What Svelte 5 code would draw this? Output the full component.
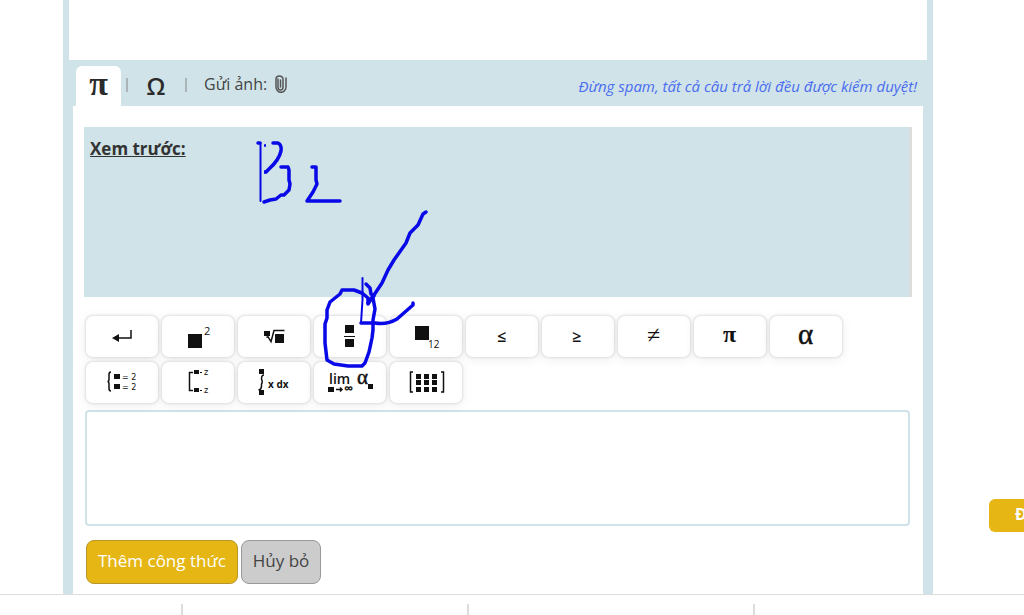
<script lang="ts">
    type Box = [number, number, number, number];
    type Label = { x: number; y: number; size: number; text: string; kind?: string };
    type Key = { name: string; boxes?: Box[]; line?: string; fill?: string; labels?: Label[] };

    let formula = $state("");

    // Every glyph is drawn on a 72x41 canvas, the size of a key
    const rows: Key[][] = [
        [
            { name: "Xuống dòng", line: "M29 22H45V14", fill: "M26 22l7-4v8z" },
            {
                name: "Lũy thừa",
                boxes: [[26, 18, 14, 14]],
                labels: [{ x: 42, y: 19, size: 11, text: "2" }],
            },
            {
                name: "Căn bậc n",
                boxes: [[26, 15, 6, 5], [37, 18, 9, 9]],
                line: "M28.5 21.5l1.5-.8 3 5L36 14.5H46.5",
            },
            { name: "Phân số", boxes: [[31, 9, 9, 8], [30, 20, 11, 1], [31, 23, 9, 8]] },
            {
                name: "Chỉ số dưới",
                boxes: [[25, 10, 14, 14]],
                labels: [{ x: 38, y: 32, size: 10, text: "12" }],
            },
            { name: "Nhỏ hơn hoặc bằng", labels: [{ x: 31, y: 26, size: 16, text: "≤", kind: "semi" }] },
            { name: "Lớn hơn hoặc bằng", labels: [{ x: 30, y: 26, size: 16, text: "≥", kind: "semi" }] },
            { name: "Khác", labels: [{ x: 29, y: 27, size: 24, text: "≠", kind: "greek" }] },
            { name: "Pi", labels: [{ x: 29, y: 26, size: 24, text: "π", kind: "math" }] },
            { name: "Alpha", labels: [{ x: 28, y: 28, size: 29, text: "α", kind: "greek heavy" }] },
        ],
        [
            {
                name: "Hệ phương trình",
                boxes: [[28, 12, 6, 5], [28, 22, 6, 5]],
                line: "M25 10Q23 10 23 12.5V17Q23 19.5 21.5 19.5Q23 19.5 23 22V26.5Q23 29 25 29",
                labels: [
                    { x: 36, y: 18, size: 8, text: "= 2", kind: "wide" },
                    { x: 36, y: 28, size: 8, text: "= 2", kind: "wide" },
                ],
            },
            {
                name: "Tập nghiệm",
                boxes: [[32, 8, 5, 4], [32, 26, 5, 4], [38, 10, 2, 1], [38, 28, 2, 1]],
                line: "M31 10.5H27.5V28.5H31",
                labels: [
                    { x: 42, y: 13, size: 8, text: "z", kind: "wide" },
                    { x: 42, y: 31, size: 8, text: "z", kind: "wide" },
                ],
            },
            {
                name: "Tích phân",
                boxes: [[21, 7, 5, 5], [21, 28, 5, 5]],
                line: "M26 13Q23.5 13 23.5 17Q25 20 23.5 22Q24 27.5 20.5 28",
                labels: [{ x: 30, y: 26, size: 10, text: "x dx", kind: "bold" }],
            },
            {
                name: "Giới hạn",
                boxes: [[14, 25, 6, 5], [54, 22, 5, 5]],
                line: "M22 27.5H28M26 25.5l2 2-2 2",
                labels: [
                    { x: 15, y: 22, size: 14, text: "lim", kind: "semi" },
                    { x: 30, y: 31, size: 13, text: "∞", kind: "bold" },
                    { x: 43, y: 22, size: 21, text: "α", kind: "greek heavy" },
                ],
            },
            {
                name: "Ma trận",
                boxes: [12, 18, 25].flatMap((y) => [26, 34, 42].map((x): Box => [x, y, 5, 5])),
                line: "M23 10H20.5V30H23M51 10H53.5V30H51",
            },
        ],
    ];
</script>

<div class="page">
    <main class="frame">
        <div class="answer"></div>

        <header class="toolbar">
            <button class="tab active" type="button" aria-label="Công thức">π</button>
            <span class="divider"></span>
            <button class="tab omega" type="button" aria-label="Ký tự">Ω</button>
            <span class="divider"></span>
            <button class="attach" type="button">
                Gửi ảnh:
                <svg width="14" height="18" viewBox="0 0 14 18" aria-hidden="true">
                    <path d="M4 4V12a2.5 3 0 0 0 5 0V4a3.5 3 0 0 0-7 0V12a4.7 5 0 0 0 10 0V3" />
                    <path d="M6.5 5V12" />
                </svg>
            </button>
            <em class="notice">Đừng spam, tất cả câu trả lời đều được kiểm duyệt!</em>
        </header>

        <section class="editor">
            <div class="preview">
                <strong>Xem trước:</strong>
                <svg class="ink" width="200" height="250" viewBox="240 130 200 250" aria-hidden="true">
                    <path class="thin" d="M260.5 143V201" />
                    <path d="M258 143H260M273 143H278Q282 145 281 151Q279 160 269 169L266 172M281 167L288 167L289 170V180L290 184L289 190L284 195H281L276 199L270 200L264 202" />
                    <path class="thin" d="M265 145V146M265 171V173" />
                    <path d="M312 167H316V180L317 184L313 192L311 195L307 201H340" />
                    <path d="M426 212L423 214L418 225L410 233L406 243L394 260L388 270L382 283L374 295L368 303" />
                    <path d="M366 284L370 288L371 294L374 296M362 293L368 298L368 304L373 296" />
                    <path class="thin" d="M362.5 278V300L361 323" />
                    <path d="M361 323H375Q387 325 397 319L413 305V303" />
                    <path d="M362 293L354 290H342L340 294L330 302L327 310V318L325 324V343L327 360L334 364L348 366H362L365 363L369 352L372 338L373 330V320L375 309L373 298" />
                </svg>
            </div>

            <div class="keys">
                {#each rows as row}
                    <div class="row">
                        {#each row as key}
                            <button class="key" type="button" aria-label={key.name}>
                                <svg width="72" height="41" viewBox="0 0 72 41" aria-hidden="true">
                                    {#each key.boxes ?? [] as [x, y, w, h]}
                                        <rect {x} {y} width={w} height={h} />
                                    {/each}
                                    {#if key.line}
                                        <path class="line" d={key.line} />
                                    {/if}
                                    {#if key.fill}
                                        <path d={key.fill} />
                                    {/if}
                                    {#each key.labels ?? [] as label}
                                        <text class={label.kind} x={label.x} y={label.y} font-size={label.size}>{label.text}</text>
                                    {/each}
                                </svg>
                            </button>
                        {/each}
                    </div>
                {/each}
            </div>

            <textarea aria-label="Công thức" bind:value={formula}></textarea>

            <div class="actions">
                <button class="action primary" type="button">Thêm công thức</button>
                <button class="action" type="button">Hủy bỏ</button>
            </div>
        </section>
    </main>

    <footer class="bottom">
        <span></span>
        <span></span>
        <span></span>
    </footer>

    <button class="float" type="button">Đ</button>
</div>

<style>
    :global(body) {
        background: #fff;
        overflow: hidden;
    }

    .page {
        font-family: "Open Sans", sans-serif;
        color: #333;
    }

    button {
        font-family: inherit;
        cursor: pointer;
    }

    .frame {
        margin: 0 91px 0 63px;
        background: #d0e3e8;
    }

    .answer {
        height: 60px;
        margin: 0 6px;
        background: #fff;
    }

    .toolbar {
        display: flex;
        align-items: center;
        height: 40px;
        padding: 6px 16px 0 13px;
    }

    .tab {
        width: 45px;
        height: 40px;
        padding: 0 0 4px;
        border: 0;
        background: none;
        color: #2b2b2b;
        font: bold 34px/32px "Liberation Serif", serif;
    }

    .tab.active {
        background: #fff;
        border-radius: 6px 6px 0 0;
    }

    .tab.omega {
        width: 56px;
        padding: 0;
        font: 600 24px/32px "Open Sans", sans-serif;
    }

    .divider {
        width: 2px;
        height: 14px;
        margin-left: 5px;
        margin-bottom: 2px;
        background: #abb4b7;
    }

    .divider + .omega {
        margin-right: -4px;
    }

    .attach {
        display: flex;
        align-items: center;
        gap: 7px;
        margin-left: 17px;
        margin-bottom: 4px;
        padding: 0;
        border: 0;
        background: none;
        color: #444;
        font-size: 16px;
        line-height: 24px;
    }

    .attach svg {
        fill: none;
        stroke: #555;
        stroke-width: 1.5;
        stroke-linecap: round;
    }

    .notice {
        margin-left: auto;
        color: #4a6cf0;
        font-size: 15px;
        line-height: 20px;
        white-space: nowrap;
    }

    .editor {
        margin: 0 10px;
        padding: 21px 11px 10px;
        background: #fff;
    }

    .preview {
        position: relative;
        height: 170px;
        box-sizing: border-box;
        padding: 10px 6px;
        border-right: 3px solid #dddcdd;
        background: #d0e3e8;
        font-size: 17px;
        line-height: 24px;
    }

    .preview strong {
        text-decoration: underline;
    }

    .ink {
        position: absolute;
        left: 156px;
        top: 3px;
        z-index: 1;
        fill: none;
        stroke: #0909e8;
        stroke-width: 3.5;
        stroke-linecap: round;
        stroke-linejoin: round;
        pointer-events: none;
    }

    .ink .thin {
        stroke-width: 2;
    }

    .keys {
        display: flex;
        flex-direction: column;
        gap: 5px;
        padding: 19px 0 7px 2px;
    }

    .row {
        display: flex;
        gap: 4px;
    }

    .key {
        padding: 0;
        border: 0;
        border-radius: 7px;
        background: #fff;
        box-shadow: 0 0 2px 1px #e0e0e0, 0 2px 12px rgba(0, 0, 0, 0.08);
    }

    .key svg {
        display: block;
        fill: #111;
    }

    .line {
        fill: none;
        stroke: #111;
        stroke-width: 1.5;
    }

    .bold {
        font-weight: 700;
    }

    .semi {
        font-weight: 600;
    }

    .wide {
        font-family: "DejaVu Sans", sans-serif;
    }

    .math {
        font-family: "Liberation Serif", serif;
        font-weight: 700;
    }

    .greek {
        font-family: "Liberation Serif", serif;
    }

    .heavy {
        stroke: #111;
        stroke-width: 0.5;
    }

    textarea {
        display: block;
        width: calc(100% - 3px);
        height: 116px;
        box-sizing: border-box;
        margin-left: 1px;
        border: 2px solid #d0e3e8;
        border-radius: 4px;
        resize: none;
        font: 16px/24px "Open Sans", sans-serif;
        outline: none;
    }

    .actions {
        display: flex;
        gap: 3px;
        padding: 14px 0 0 2px;
    }

    .action {
        height: 44px;
        padding: 0 11px 2px;
        border: 1px solid #999;
        border-radius: 8px;
        background: #ccc;
        color: #444;
        font-size: 17px;
        line-height: 24px;
    }

    .action.primary {
        border-color: #b8962a;
        background: #e5b614;
        color: #fff;
    }

    .bottom {
        display: grid;
        grid-template-columns: 183px 286px 286px;
        height: 21px;
        padding-top: 9px;
        box-sizing: border-box;
        border-top: 1px solid #ddd;
        background: #fff;
    }

    .bottom span {
        border-right: 2px solid #ddd;
    }

    .float {
        position: fixed;
        right: -29px;
        bottom: 83px;
        width: 64px;
        height: 33px;
        padding: 0 0 4px;
        border: 0;
        border-radius: 6px;
        background: #e5b614;
        color: #fff;
        font-size: 16px;
        font-weight: 700;
    }
</style>
